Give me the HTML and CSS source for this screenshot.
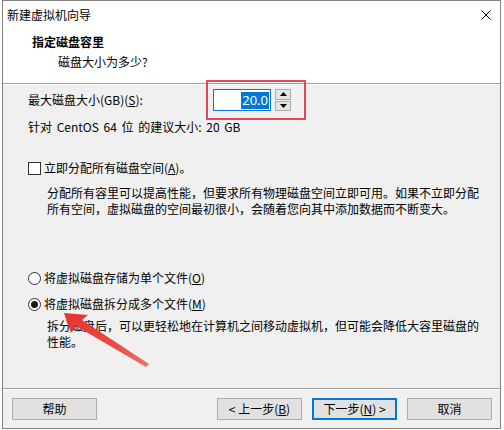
FILE: index.html
```html
<!DOCTYPE html>
<html lang="zh-CN">
<head>
<meta charset="utf-8">
<title>新建虚拟机向导</title>
<link rel="stylesheet" href="styles.css">
</head>
<body>
<div class="window">
  <div class="titlebar">
    <span class="title">新建虚拟机向导</span>
    <svg class="close" width="10" height="10" viewBox="0 0 10 10"><path d="M0.5 0.5 L9.5 9.5 M9.5 0.5 L0.5 9.5" stroke="#000" stroke-width="1" fill="none"/></svg>
  </div>
  <div class="header">
    <div class="h-title">指定磁盘容里</div>
    <div class="h-sub">磁盘大小为多少?</div>
  </div>
  <div class="content">
    <div class="size-row">
      <span class="size-label">最大磁盘大小(GB)(<u>S</u>):</span>
      <div class="field"><span class="sel">20.0</span></div>
      <div class="spin-btns">
        <div class="spin-btn"><svg width="7" height="4" viewBox="0 0 7 4"><path d="M0 4 L3.5 0 L7 4 Z" fill="#000"/></svg></div>
        <div class="spin-btn"><svg width="7" height="4" viewBox="0 0 7 4"><path d="M0 0 L3.5 4 L7 0 Z" fill="#000"/></svg></div>
      </div>
    </div>
    <div class="rec">针对 CentOS 64 位 的建议大小: 20 GB</div>
    <div class="option check-row"><span class="checkbox"></span><span>立即分配所有磁盘空间(<u>A</u>)。</span></div>
    <div class="desc desc1">分配所有容里可以提高性能，但要求所有物理磁盘空间立即可用。如果不立即分配所有空间，虚拟磁盘的空间最初很小，会随着您向其中添加数据而不断变大。</div>
    <div class="option radio-row r1"><span class="radio"></span><span>将虚拟磁盘存储为单个文件(<u>O</u>)</span></div>
    <div class="option radio-row r2"><span class="radio checked"></span><span>将虚拟磁盘拆分成多个文件(<u>M</u>)</span></div>
    <div class="desc desc2">拆分磁盘后，可以更轻松地在计算机之间移动虚拟机，但可能会降低大容里磁盘的性能。</div>
  </div>
  <div class="footer">
    <button class="btn">帮助</button>
    <div class="nav">
      <button class="btn">&lt; 上一步(<u>B</u>)</button>
      <button class="btn default">下一步(<u>N</u>) &gt;</button>
      <button class="btn">取消</button>
    </div>
  </div>
  <div class="annot-rect"></div>
</div>
<svg class="arrow" width="504" height="430" viewBox="0 0 504 430">
  <defs>
    <linearGradient id="ag" x1="64" y1="313" x2="148" y2="367" gradientUnits="userSpaceOnUse">
      <stop offset="0" stop-color="#e6322c"/>
      <stop offset="0.6" stop-color="#ea4a45"/>
      <stop offset="1" stop-color="#f07070"/>
    </linearGradient>
  </defs>
  <path d="M64 313 L88 315 L82 320 L149 364 L146 367 L76 326 L71 333 Z" fill="url(#ag)"/>
</svg>
</body>
</html>
```
FILE: styles.css
```css
* { box-sizing: border-box; }
html, body { margin: 0; padding: 0; }
body {
  position: relative;
  width: 504px;
  height: 430px;
  overflow: hidden;
  background: #ffffff;
  font-family: "Noto Sans CJK SC", "Microsoft YaHei", sans-serif;
  font-size: 12px;
  line-height: 16px;
  color: #000;
}
u { text-decoration: underline; text-underline-offset: 1px; }
.window {
  position: relative;
  margin-left: 2px;
  width: 499px;
  height: 429px;
  border: 1px solid #838383;
  background: #f0f0f0;
  display: flex;
  flex-direction: column;
}
.titlebar {
  height: 30px;
  background: #fff;
  display: flex;
  align-items: center;
  justify-content: space-between;
  padding: 0 9px 2px 4px;
}
.close { display: block; }
.header {
  height: 53px;
  background: #fff;
  border-bottom: 1px solid #a0a0a0;
  padding: 3px 0 0 29px;
}
.h-title { font-weight: 700; }
.h-sub { margin-top: 4px; margin-left: 26px; }
.content {
  flex: 1;
  border-top: 1px solid #fff;
  padding-left: 25px;
}
.size-row {
  margin-top: 4px;
  height: 22px;
  display: flex;
  align-items: center;
}
.size-label { width: 185px; }
.field {
  width: 58px;
  height: 22px;
  border: 1px solid #0078d7;
  background: #fff;
  display: flex;
  align-items: center;
  justify-content: flex-end;
  padding-right: 1px;
}
.sel {
  background: #0078d7;
  color: #fff;
  font-family: "Noto Sans", "Liberation Sans", sans-serif;
  font-size: 13px;
  line-height: 17px;
  padding: 0 1px;
}
.spin-btns {
  margin-left: 4px;
  width: 16px;
  height: 22px;
  display: flex;
  flex-direction: column;
  gap: 1px;
}
.spin-btn {
  flex: 1;
  border: 1px solid #adadad;
  background: #e5e5e5;
  display: flex;
  align-items: center;
  justify-content: center;
}
.spin-btn svg { display: block; }
.rec { margin-top: 8px; word-spacing: 2px; }
.option { display: flex; align-items: center; gap: 3px; }
.check-row { margin-top: 25px; }
.checkbox {
  width: 13px;
  height: 13px;
  border: 1px solid #333;
  background: #fff;
}
.radio {
  width: 13px;
  height: 13px;
  border: 1px solid #333;
  border-radius: 50%;
  background: #fff;
  display: flex;
  align-items: center;
  justify-content: center;
}
.radio.checked::after {
  content: "";
  width: 7px;
  height: 7px;
  border-radius: 50%;
  background: #1a1a1a;
}
.desc { margin-left: 19px; width: 434px; }
.desc1 { margin-top: 9px; }
.r1 { margin-top: 53px; }
.r2 { margin-top: 10px; }
.desc2 { margin-top: 6px; }
.footer {
  height: 40px;
  border-top: 1px solid #a0a0a0;
  box-shadow: inset 0 1px 0 #fff;
  padding: 9px 8px 0 9px;
  display: flex;
  justify-content: space-between;
}
.nav { display: flex; gap: 10px; }
.btn {
  width: 85px;
  height: 22px;
  margin: 0;
  padding: 0;
  border: 1px solid #adadad;
  background: #e1e1e1;
  font-family: inherit;
  font-size: 12px;
  line-height: 18px;
  color: #000;
}
.btn.default {
  border-color: #0078d7;
  box-shadow: inset 0 0 0 1px #0078d7;
}
.annot-rect {
  position: absolute;
  left: 203px;
  top: 79px;
  width: 100px;
  height: 40px;
  border: 2px solid #df4a56;
}
.arrow {
  position: absolute;
  left: 0;
  top: 0;
  pointer-events: none;
}
```
